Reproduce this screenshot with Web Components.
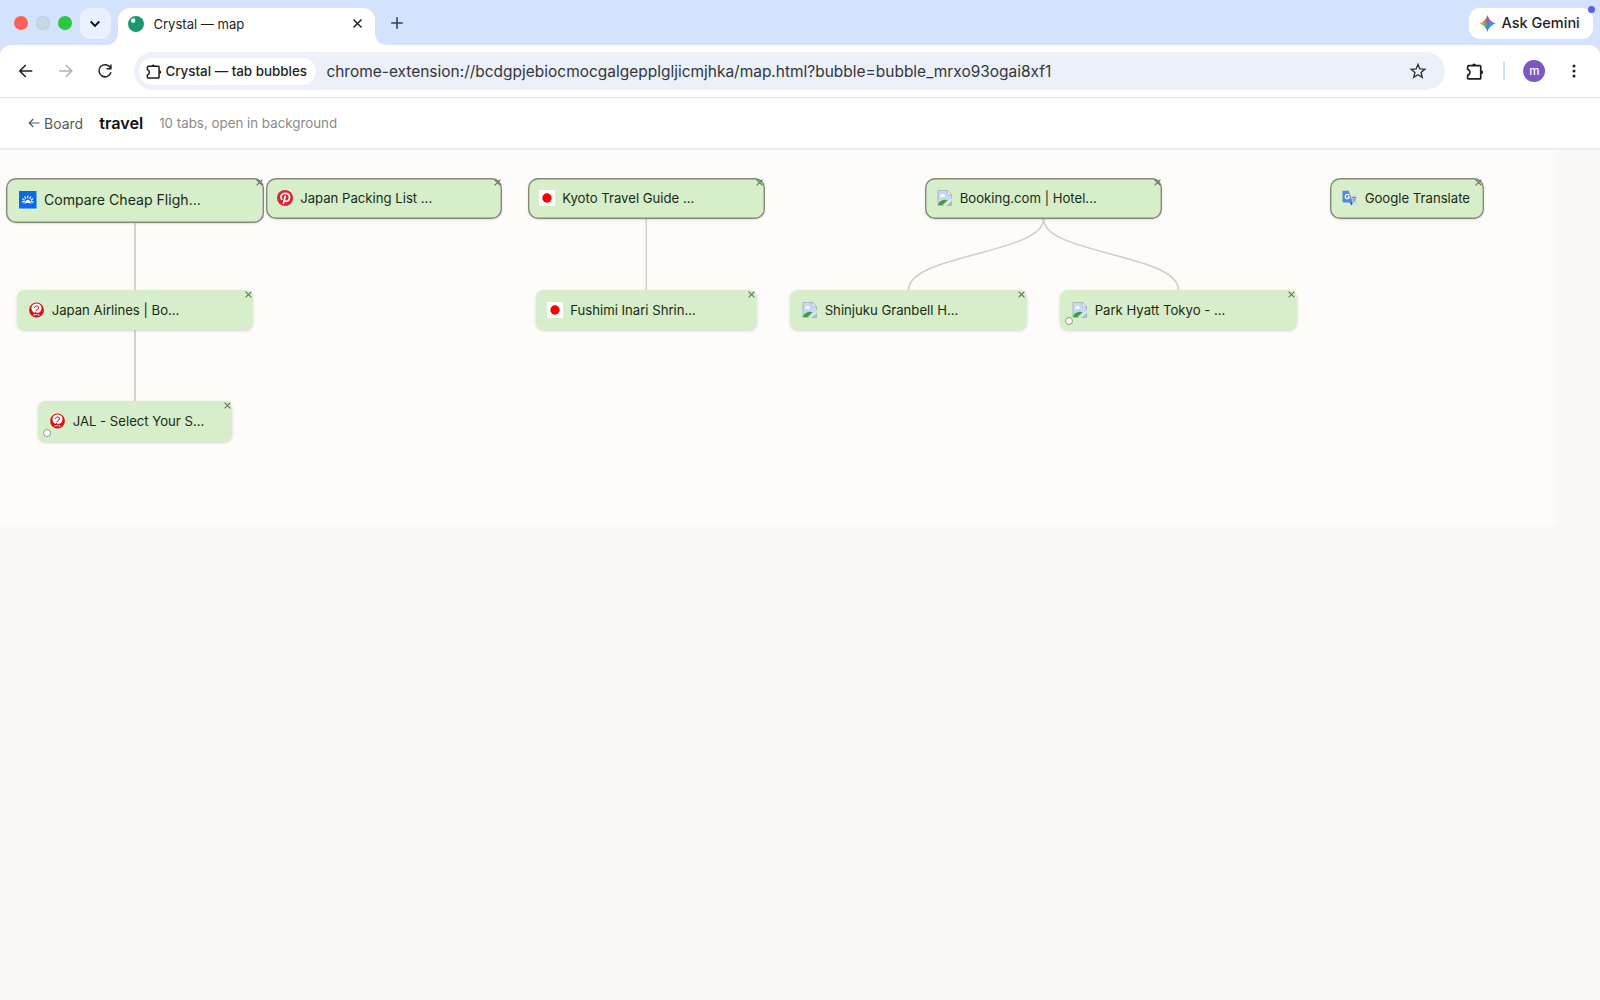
<!DOCTYPE html>
<html lang="en">
<head>
<meta charset="utf-8">
<title>Crystal — map</title>
<style>
html, body {
    margin: 0;
    height: 100%;
    overflow: hidden;
    background: #faf9f8;
    font-family: Inter, "Liberation Sans", sans-serif;
    color: #1f1f1f;
}
body {
    display: flex;
    flex-direction: column;
}
</style>
</head>
<body>
<browser-tabs label="Crystal — map"></browser-tabs>
<browser-toolbar chip="Crystal — tab bubbles">chrome-extension://bcdgpjebiocmocgalgepplgljicmjhka/map.html?bubble=bubble_mrxo93ogai8xf1</browser-toolbar>
<map-header>
    <span slot="title">travel</span>
    <span slot="count">10 tabs, open in background</span>
</map-header>
<bubble-map>
    <tab-node root large x="6" y="28" w="258" h="45" icon="skyscanner">Compare Cheap Fligh...</tab-node>
    <tab-node root x="265.500" y="28" w="236.500" h="41" icon="pinterest">Japan Packing List ...</tab-node>
    <tab-node root x="527.500" y="28" w="237" h="41" icon="japan">Kyoto Travel Guide ...</tab-node>
    <tab-node root x="925" y="28" w="237" h="41" icon="broken">Booking.com | Hotel...</tab-node>
    <tab-node root x="1330" y="28" w="153.500" h="41" icon="translate">Google Translate</tab-node>
    <tab-node x="17" y="139.5" w="236" h="40.500" icon="jal">Japan Airlines | Bo...</tab-node>
    <tab-node x="535.500" y="139.5" w="221" h="40.500" icon="japan">Fushimi Inari Shrin...</tab-node>
    <tab-node x="790" y="139.5" w="236.5" h="40.500" icon="broken">Shinjuku Granbell H...</tab-node>
    <tab-node dot x="1060" y="139.5" w="236.500" h="40.500" icon="broken">Park Hyatt Tokyo - ...</tab-node>
    <tab-node dot x="38" y="251" w="194" h="40.500" icon="jal">JAL - Select Your S...</tab-node>
</bubble-map>

<script>
const PUZZLE = '<path d="M3.600 3.500H14.200Q14.900 3.500 14.900 4.200V15.300Q14.900 16 14.200 16H3.300Q2.500 16 2.500 15.200V12.700Q4.700 11.800 4.700 9.800 4.700 7.800 2.500 6.900V4.400Q2.500 3.500 3.600 3.500Z" fill="none" stroke="currentColor" stroke-width="1.600" stroke-linejoin="round"/><path d="M6.800 3.200Q7 1.500 8.700 1.500T10.600 3.200ZM15.300 7.800Q17.200 8 17.200 9.700T15.300 11.600Z" fill="currentColor"/>';

const ICONS = {
    skyscanner: `<rect width="16" height="16" fill="#0969ea"/>
        <g stroke="#fff" stroke-width="1" stroke-linecap="round" fill="none">
        <path d="M8 4.500v1.700M5.300 5.200l.8 1.600M10.700 5.200l-.8 1.600M3.300 7.100l1.600 1.100M12.700 7.100l-1.600 1.100M2.900 10l1.800-.5M13.100 10l-1.800-.5"/></g>
        <path d="M3 11.600Q5.600 10.800 5.900 9.300Q8 6.700 10.100 9.300Q10.400 10.800 13 11.600Q8 10.300 3 11.600Z" fill="#fff"/>`,
    pinterest: `<circle cx="8" cy="8" r="8" fill="#e0212f"/>
        <path d="M4.700 9.200C2.600 5.600 5.300 3.300 8.200 3.300c2.700 0 4.300 1.700 4.300 3.800 0 2.500-1.500 4.200-3.400 4.200-.9 0-1.600-.5-1.800-1.100M8.200 6.300l-1.800 7.200" fill="none" stroke="#fff" stroke-width="1.700" stroke-linecap="round"/>`,
    japan: '<rect width="16" height="16" fill="#fff"/><circle cx="8" cy="8" r="4.700" fill="#f00"/>',
    jal: `<circle cx="7.500" cy="8" r="7.400" fill="#d90d14"/>
        <path d="M3.600 9.400C.9 5.800 3.300 1.700 7.500 1.600c4.300.1 6.600 4.200 3.900 7.800-.8 1-1.900 1.400-3.100 1.400-1.700 0-2-.7-1.600-1.500L5.200 11Z" fill="#fff"/>
        <path d="M5.400 5.900Q5.700 3.900 7.700 3.900 9.900 4 9.700 5.900 9.400 7.300 7.800 7.600 7 8 7.100 9" fill="none" stroke="#d90d14" stroke-width="1"/>
        <path d="M4.300 13.200h1V12M6.300 13.300l.9-1.400.9 1.400M9.300 11.900v1.300h1.400" fill="none" stroke="#fff" stroke-width=".8"/>`,
    broken: `<path d="M1 .5H10.500L14.500 4.500V15.500H1Z" fill="#c7d8f6" stroke="#a6adb9" stroke-width=".8"/>
        <path d="M10.300.7V4.800H14.500Z" fill="#fff" stroke="#a6adb9" stroke-width=".7"/>
        <path d="M2.800 6.700Q2.800 5.200 4.300 5.100 5 3 6.600 4.300 8 4.800 7.800 6.700Z" fill="#fff"/>
        <path d="M1.400 15.100V13.500Q5 8.500 10.500 10.300L5.500 15.100Z" fill="#43a030"/>
        <path d="M6.500 16L14.900 8.300V10.300L8.800 16Z" fill="#e2f3dc"/>
        <path d="M10.500 15.100L14.100 11.800V15.100Z" fill="#a5c5a5"/>`,
    translate: `<path d="M7 4.800H13.800Q15 4.800 15 6V14Q15 15.200 13.800 15.200H9.800Z" fill="#d6dce6"/>
        <path d="M1.500.8H6.800L10.700 12.500H1.500Q.5 12.500.5 11.500V1.800Q.5.8 1.500.8Z" fill="#4f86ee"/>
        <path d="M7.500 12.300H10.700L9.600 15.400Z" fill="#264fc0"/>
        <path d="M7.200 5.300A2.200 2.200 0 1 0 7.500 7.100H5.500" fill="none" stroke="#fff" stroke-width="1.200"/>
        <path d="M9.800 7.600H14.100M11.900 6.500V7.600M13.500 7.800Q12.800 10.300 10.700 11.700M10.500 8.800L13.600 12" fill="none" stroke="#6c7787" stroke-width=".9"/>`
};

class CrystalElement extends HTMLElement {
    constructor() {
        super();
        this.attachShadow({mode: 'open'});
    }

    connectedCallback() {
        this.shadowRoot.innerHTML = this.render();
    }
}

class BrowserTabs extends CrystalElement {
    render() {
        return `
<style>
:host {
    display: flex;
    box-sizing: border-box;
    flex: none;
    height: 45px;
    padding: 8px 7px 0 14px;
    background: #d3e2fd;
}
svg { display: block; flex: none; }
.lights {
    display: flex;
    gap: 8.200px;
    padding-top: 8px;
}
.lights i {
    width: 14px;
    height: 14px;
    border-radius: 50%;
    background: #ff5f57;
}
.lights i:nth-child(2) { background: #c9d6e3; box-shadow: inset 0 0 0 .5px #b9c6d6; }
.lights i:nth-child(3) { background: #28c840; }
.search {
    display: grid;
    place-items: center;
    width: 31px;
    height: 31px;
    margin-left: 7.600px;
    border-radius: 10px;
    background: #e8f1ff;
}
.tab {
    position: relative;
    display: flex;
    align-items: center;
    box-sizing: border-box;
    width: 257px;
    height: 37px;
    margin-left: 7px;
    padding: 0 11px 6px 10px;
    border-radius: 12px 12px 0 0;
    background: #fff;
    font-size: 13.050px;
}
.tab::before, .tab::after {
    content: "";
    position: absolute;
    bottom: 0;
    width: 11px;
    height: 11px;
}
.tab::before { left: -11px; background: radial-gradient(circle at 0 0, transparent 10.500px, #fff 11px); }
.tab::after { right: -11px; background: radial-gradient(circle at 100% 0, transparent 10.500px, #fff 11px); }
.tab span { flex: 1; margin-left: 9.500px; line-height: 18px; }
.plus { margin: 8px 0 0 15.500px; }
.gemini {
    position: relative;
    display: flex;
    align-items: center;
    box-sizing: border-box;
    height: 31px;
    width: 124px;
    margin-left: auto;
    padding-left: 9.500px;
    gap: 6px;
    border-radius: 11px;
    background: #fff;
    font-size: 14.500px;
    font-weight: 500;
    white-space: nowrap;
}
.gemini span { margin-top: -2.500px; }
.gemini svg { margin-top: -1px; }
.gemini::after {
    content: "";
    position: absolute;
    top: -2.500px;
    right: -2px;
    width: 7px;
    height: 7px;
    border-radius: 50%;
    background: #5b5ff0;
}
</style>
<div class="lights"><i></i><i></i><i></i></div>
<div class="search"><svg width="12" height="8" viewBox="0 0 12 8"><path d="M1.700 1.500L6 5.800 10.300 1.500" fill="none" stroke="#111" stroke-width="1.900"/></svg></div>
<div class="tab">
    <svg width="16" height="16" viewBox="0 0 16 16"><circle cx="8" cy="8" r="8" fill="#1c9870"/><circle cx="5.200" cy="4.600" r="2.300" fill="#e4f6ef"/></svg>
    <span>${this.getAttribute('label')}</span>
    <svg width="13" height="13" viewBox="0 0 13 13"><path d="M2.500 2.500l8 8m0-8l-8 8" stroke="#1f1f1f" stroke-width="1.500"/></svg>
</div>
<svg class="plus" width="14" height="14" viewBox="0 0 14 14"><path d="M7 1.200v11.600M1.200 7h11.600" stroke="#3b4252" stroke-width="1.600"/></svg>
<div class="gemini">
    <svg width="17" height="17" viewBox="0 0 17 17">
        <defs>
            <linearGradient id="a" x1="0" y1="0" x2="1" y2="0"><stop offset="0" stop-color="#f2bd1d"/><stop offset=".3" stop-color="#8fb05a"/><stop offset=".5" stop-color="#3f86f5"/><stop offset="1" stop-color="#4a8cff"/></linearGradient>
            <linearGradient id="b" x1="0" y1="0" x2="0" y2="1"><stop offset="0" stop-color="#f0433c"/><stop offset=".25" stop-color="#f0433c" stop-opacity=".8"/><stop offset=".48" stop-color="#f0433c" stop-opacity="0"/><stop offset=".6" stop-color="#1fae55" stop-opacity="0"/><stop offset="1" stop-color="#1fae55"/></linearGradient>
        </defs>
        <path d="M8.500.3C9.600 4.500 12.500 7.400 16.700 8.500 12.500 9.600 9.600 12.500 8.500 16.700 7.400 12.500 4.500 9.600.3 8.500 4.500 7.400 7.400 4.500 8.500.3Z" fill="url(#a)"/>
        <path d="M8.500.3C9.600 4.500 12.500 7.400 16.700 8.500 12.500 9.600 9.600 12.500 8.500 16.700 7.400 12.500 4.500 9.600.3 8.500 4.500 7.400 7.400 4.500 8.500.3Z" fill="url(#b)"/>
    </svg>
    <span>Ask Gemini</span>
</div>`;
    }
}

class BrowserToolbar extends CrystalElement {
    render() {
        return `
<style>
:host {
    display: block;
    flex: none;
    height: 53px;
    background: #d3e2fd;
}
.bar {
    display: flex;
    align-items: center;
    box-sizing: border-box;
    height: 53px;
    padding: 0 18px 0 18px;
    border-bottom: 1px solid #dedede;
    border-radius: 11px 11px 0 0;
    background: #fff;
}
svg { display: block; flex: none; }
.nav { display: flex; gap: 23.700px; }
.omnibox {
    display: flex;
    align-items: center;
    box-sizing: border-box;
    width: 1311px;
    height: 38px;
    margin-left: 21px;
    padding: 0 18.500px 0 5px;
    border-radius: 19px;
    background: #ebf0f9;
}
.chip {
    display: flex;
    align-items: center;
    box-sizing: border-box;
    width: 177px;
    height: 27px;
    padding-left: 5.500px;
    gap: 3.500px;
    border-radius: 14px;
    background: #fff;
    font-size: 13.400px;
    font-weight: 500;
    white-space: nowrap;
}
.url {
    flex: 1;
    margin-left: 10px;
    font-size: 15.480px;
    color: #33363c;
    white-space: nowrap;
}
.ext { margin-left: 19.500px; }
.sep { width: 1.500px; height: 18px; margin-left: 19.500px; background: #cddffb; }
.avatar {
    display: grid;
    place-items: center;
    width: 22px;
    height: 22px;
    margin-left: 18.500px;
    border-radius: 50%;
    background: #7e57c2;
    color: #fff;
    font-size: 11.500px;
    font-weight: 500;
    line-height: 22px;
}
.avatar span { margin-top: -1px; }
.menu { margin-left: 27px; }
</style>
<div class="bar">
    <div class="nav">
        <svg width="16" height="16" viewBox="0 0 16 16"><path d="M14.300 8H2M7.800 2L1.800 8l6 6" fill="none" stroke="#222" stroke-width="1.600"/></svg>
        <svg width="16" height="16" viewBox="0 0 16 16"><path d="M1 8h12.800M7.800 2l6 6-6 6" fill="none" stroke="#b3b3b3" stroke-width="1.600"/></svg>
        <svg width="16" height="16" viewBox="0 0 16 16"><path d="M13.500 4.900A6.100 6.100 0 1 0 14 9.300M13.900 1.400V5.700H9.500" fill="none" stroke="#222" stroke-width="1.500"/></svg>
    </div>
    <div class="omnibox">
        <div class="chip"><svg width="17" height="17" viewBox="0 0 18 18">${PUZZLE}</svg><span>${this.getAttribute('chip')}</span></div>
        <div class="url"><slot></slot></div>
        <svg width="18" height="18" viewBox="0 0 18 18"><path d="M9 2.400l1.900 4.500 4.900.4-3.700 3.200 1.100 4.800L9 12.700l-4.200 2.600 1.100-4.800-3.700-3.200 4.900-.4Z" fill="none" stroke="#30343b" stroke-width="1.400"/></svg>
    </div>
    <svg class="ext" width="19" height="19" viewBox="0 0 18 18">${PUZZLE}</svg>
    <div class="sep"></div>
    <div class="avatar"><span>m</span></div>
    <svg class="menu" width="4" height="14" viewBox="0 0 4 14"><g fill="#222"><circle cx="2" cy="2" r="1.500"/><circle cx="2" cy="7" r="1.500"/><circle cx="2" cy="12" r="1.500"/></g></svg>
</div>`;
    }
}

class MapHeader extends CrystalElement {
    render() {
        return `
<style>
:host {
    display: flex;
    align-items: center;
    box-sizing: border-box;
    flex: none;
    height: 52px;
    padding: 0 27.500px 0;
    border-bottom: 2px solid #ececeb;
    background: #fff;
    white-space: nowrap;
}
.back {
    display: flex;
    align-items: center;
    gap: 4.500px;
    font-size: 14px;
    color: #5a5a58;
}
.title { margin-left: 16px; font-size: 16.200px; font-weight: 600; color: #111; }
.count { margin-left: 16px; font-size: 13.340px; color: #8b8b87; }
</style>
<div class="back"><svg width="12" height="12" viewBox="0 0 12 12"><path d="M11.500 6H1.500M5.200 2L1.300 6l3.900 4" fill="none" stroke="currentColor" stroke-width="1.200"/></svg>Board</div>
<div class="title"><slot name="title"></slot></div>
<div class="count"><slot name="count"></slot></div>`;
    }
}

class BubbleMap extends CrystalElement {
    render() {
        return `
<style>
:host {
    display: block;
    position: relative;
    flex: none;
    width: 1556px;
    height: 375px;
    background: #fdfcfb;
}
svg { position: absolute; inset: 0; }
</style>
<svg width="1556" height="375" fill="none" stroke="#d0cdc5" stroke-width="1.500">
    <path d="M135 73V140M135 180V251" stroke="#d6d4c8" stroke-width="2"/>
    <path d="M646.200 69V140" stroke-width="1.400"/>
    <path d="M1043.500 69C1043.500 104 908.500 104 908.500 140"/>
    <path d="M1043.500 69C1043.500 104 1178.500 104 1178.500 140"/>
</svg>
<slot></slot>`;
    }
}

class TabNode extends CrystalElement {
    connectedCallback() {
        super.connectedCallback();
        this.style.left = this.getAttribute('x') + 'px';
        this.style.top = this.getAttribute('y') + 'px';
        this.style.width = this.getAttribute('w') + 'px';
        this.style.height = this.getAttribute('h') + 'px';
    }

    render() {
        const size = this.hasAttribute('large') ? 17.5 : 16;
        return `
<style>
:host {
    position: absolute;
    display: flex;
    align-items: center;
    box-sizing: border-box;
    padding-left: 11.500px;
    gap: 7.200px;
    border-radius: 8px;
    background: #d6eec9;
    box-shadow: 0 1px 3px rgba(60, 80, 60, .22);
    color: #1b2a17;
    font-size: 13.150px;
    line-height: 20px;
    white-space: nowrap;
}
:host([root]) {
    padding-bottom: .8px;
    border-radius: 10px;
    box-shadow: inset 0 0 0 1.400px #85897a, 0 1px 2px rgba(60, 60, 60, .15);
}
:host([large]) {
    padding-left: 13px;
    gap: 7.500px;
    font-size: 14.100px;
}
svg { display: block; flex: none; }
.close {
    position: absolute;
    top: 1.200px;
    right: 1.500px;
}
.dot {
    position: absolute;
    left: 5px;
    bottom: 5px;
    box-sizing: border-box;
    width: 8px;
    height: 8px;
    border: 1px solid #8c998c;
    border-radius: 50%;
    background: #fff;
}
</style>
<svg width="${size}" height="${size}" viewBox="0 0 16 16">${ICONS[this.getAttribute('icon')]}</svg>
<span><slot></slot></span>
<svg class="close" width="7" height="7" viewBox="0 0 7 7"><path d="M.6.6l5.800 5.800m0-5.800L.6 6.400" stroke="#5f7457" stroke-width="1.100"/></svg>
${this.hasAttribute('dot') ? '<div class="dot"></div>' : ''}`;
    }
}

customElements.define('browser-tabs', BrowserTabs);
customElements.define('browser-toolbar', BrowserToolbar);
customElements.define('map-header', MapHeader);
customElements.define('bubble-map', BubbleMap);
customElements.define('tab-node', TabNode);
</script>
</body>
</html>
